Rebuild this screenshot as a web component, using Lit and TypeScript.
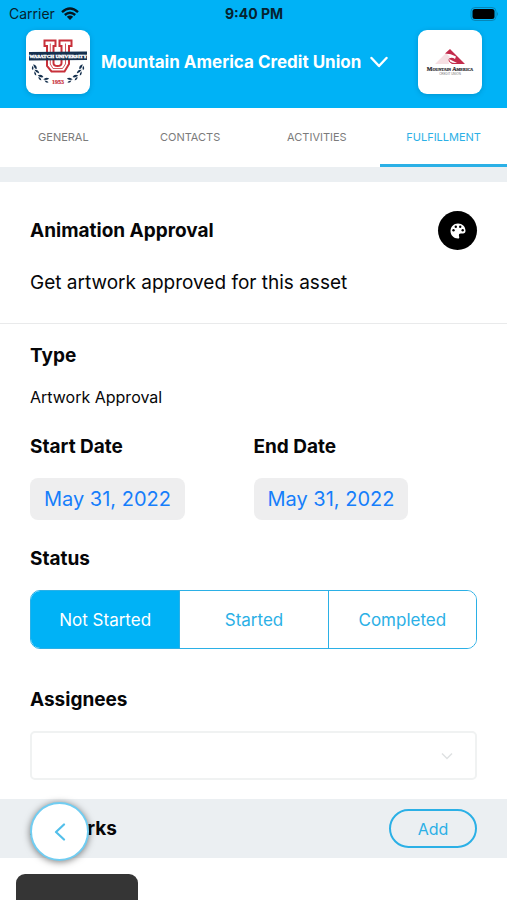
import { LitElement, html, css, svg } from "lit";
import { customElement, state } from "lit/decorators.js";
import { classMap } from "lit/directives/class-map.js";

@customElement("school-logo")
class SchoolLogo extends LitElement {
  static styles = css`
    :host { display: block; }
    svg { display: block; width: 100%; height: 100%; }
    .banner { font: 700 5px "Liberation Serif", serif; fill: #fff; stroke: #fff; stroke-width: 0.4; }
    .year { font: 700 6px "Liberation Serif", serif; fill: #c8303a; stroke: #c8303a; stroke-width: 0.2; }
  `;
  render() {
    const leaves = [
      [8, 37, 75], [10, 42, 55], [14, 47, 35], [20, 50, 10],
    ];
    const side = leaves.map(
      ([x, y, r]) => svg`<g transform="translate(${x} ${y}) rotate(${r})">
        <path d="M-2.8 0Q-.5-3.600 2.800-2Q1.800.4-2.8 0Z"/><path d="M-1.400.8Q1.200.2 3 1.800Q.8 3.600-1.400.8Z"/></g>`
    );
    return html`<svg viewBox="0 0 64 64" role="img" aria-label="Wasatch University">
      <path d="M18.500 10.500H29.500V16H27.500V33Q27.500 36 31.500 36Q35.500 36 35.500 33V16H33.500V10.500H45.500V16H43V34L38.500 41.500H25.500L21 36V16H18.500Z"
        fill="#fff" stroke="#c8303a" stroke-width="2" />
      <path d="M24.300 13.500V34L27 38.500H36.500L39.500 34V13.500" fill="none" stroke="#c8303a" stroke-width=".8" />
      <path d="M3 22L61 21.500V30L3 30.500Z" fill="#15304e" />
      <text class="banner" x="32" y="28" text-anchor="middle">WASATCH UNIVERSITY</text>
      <g fill="#15304e">${side}</g>
      <g fill="#15304e" transform="matrix(-1 0 0 1 64 0)">${side}</g>
      <text class="year" x="32" y="54" text-anchor="middle">1953</text>
    </svg>`;
  }
}

@customElement("sponsor-logo")
class SponsorLogo extends LitElement {
  static styles = css`
    :host { display: block; }
    svg { display: block; width: 100%; height: 100%; }
    .name { font: 700 5px "Liberation Serif", serif; fill: #2c2a30; stroke: #2c2a30; stroke-width: 0.2; }
    .cap { font-size: 6px; }
    .small { font-size: 4px; }
    .sub { font: 400 3px "Liberation Sans", sans-serif; fill: #77757a; }
  `;
  render() {
    return html`<svg viewBox="0 0 64 64" role="img" aria-label="Mountain America Credit Union">
      <path d="M17 34L28 23L32 27Q29 29 31 34Z" fill="#f6dfe3" />
      <path d="M27 23.500L32 19L47 34H34Q29 31 31 28.500Q34 27 37 29L38 26.500Q33 23.500 27 23.500Z" fill="#c32b4c" />
      <path d="M31 29Q35 31 39 33Q35 33.500 32 31.500Z" fill="#fff" />
      <text class="name" x="32" y="41" text-anchor="middle"><tspan class="cap">M</tspan><tspan class="small">OUNTAIN</tspan> <tspan class="cap">A</tspan><tspan class="small">MERICA</tspan></text>
      <text class="sub" x="32" y="45" text-anchor="middle">CREDIT UNION</text>
    </svg>`;
  }
}

@customElement("app-root")
class AppRoot extends LitElement {
  @state() private tab = "Fulfillment";
  @state() private status = "Not Started";

  static styles = css`
    :host {
      display: flex; flex-direction: column; height: 100vh; overflow: hidden; position: relative;
      background: #fff; color: #060608; font-family: Inter, "Noto Sans", sans-serif;
      --blue: #00b2f6; --line-blue: #2bb0e6; --band: #ebeff2; --gutter: 30px;
    }
    * { box-sizing: border-box; }
    button, select { font: inherit; margin: 0; cursor: pointer; }
    h1, h2, p { margin: 0; }
    svg { display: block; }

    .top { background: var(--blue); flex: none; padding-bottom: 14px; }
    .device {
      display: grid; grid-template-columns: 1fr auto 1fr; align-items: center;
      height: 30px; padding: 0 8px 3px 9px; font-size: 14px; color: #06222f;
    }
    .carrier { display: flex; align-items: center; gap: 6px; }
    .clock { font-weight: 700; }
    .battery { justify-self: end; }
    .account { display: flex; align-items: center; justify-content: space-between; padding: 0 25px 0 26px; }
    .logo { width: 64px; height: 64px; flex: none; background: #fff; border-radius: 9px; box-shadow: 0 1px 5px #0050784d; }
    .switcher {
      flex: 1; display: flex; align-items: center; gap: 9px; padding: 0 0 0 11px; border: 0;
      background: none; color: #fff; font-size: 17px; font-weight: 700; white-space: nowrap;
    }

    .tabs { display: grid; grid-template-columns: repeat(4, 1fr); flex: none; height: 59px; }
    .tab {
      border: 0; border-bottom: 3px solid transparent; padding: 2px 0 0;
      background: none; color: #7b7b7b; font-size: 11px; text-transform: uppercase;
    }
    .tab.on { color: var(--line-blue); border-bottom-color: var(--line-blue); }

    main { flex: 1; min-height: 0; overflow-y: auto; scrollbar-width: none; }
    .intro { border-top: 15px solid var(--band); border-bottom: 1px solid #e9eaeb; padding: 29px var(--gutter) 26px; }
    .intro-head { display: flex; align-items: center; justify-content: space-between; }
    .title { font-size: 19px; line-height: 24px; font-weight: 700; }
    .art { width: 39px; height: 39px; border-radius: 50%; background: #000; display: grid; place-items: center; }
    .desc { margin-top: 19px; font-size: 19px; line-height: 28px; }

    .form { padding: 20px var(--gutter) 19px; }
    .plain { margin-top: 17px; font-size: 16px; line-height: 24px; }
    .dates { display: grid; grid-template-columns: 1fr 1fr; margin-top: 26px; }
    .date {
      display: block; margin-top: 19px; height: 42px; padding: 0 14px; border: 0; border-radius: 8px;
      background: #eeeeef; color: #167efb; font-size: 20px;
    }
    .gap { margin-top: 27px; }
    .segments {
      display: grid; grid-template-columns: repeat(3, 1fr); height: 59px; margin-top: 19px;
      border: 1px solid var(--line-blue); border-radius: 10px; overflow: hidden;
    }
    .segment { border: 0; border-left: 1px solid var(--line-blue); background: #fff; color: var(--line-blue); font-size: 17px; padding: 0; }
    .segment:first-child { border-left: 0; }
    .segment.on { background: var(--blue); color: #fff; }
    .assign { display: block; margin-top: 39px; }
    .picker { display: grid; align-items: center; margin-top: 19px; }
    .picker > * { grid-area: 1 / 1; }
    .select { appearance: none; width: 100%; height: 49px; border: 2px solid #f0f2f2; border-radius: 5px; background: #fff; }
    .caret { justify-self: end; margin-right: 24px; pointer-events: none; }

    .artworks { display: flex; align-items: center; justify-content: space-between; height: 59px; padding: 0 var(--gutter); background: var(--band); }
    .add { width: 88px; height: 39px; border: 2px solid var(--line-blue); border-radius: 20px; background: none; color: var(--line-blue); font-size: 16px; }
    .thumbs { padding: 16px; }
    .thumb { width: 122px; height: 122px; border-radius: 9px; background: #353535; }
    .back {
      position: absolute; left: var(--gutter); bottom: 39px; width: 59px; height: 59px; padding: 0;
      display: grid; place-items: center; border: 2px solid #70cdf2; border-radius: 50%;
      background: #fff; box-shadow: 0 1px 7px #00000080;
    }
  `;

  render() {
    return html`
      <header class="top">
        <div class="device">
          <span class="carrier">Carrier
            <svg width="18" height="14" viewBox="0 0 18 14" fill="none" stroke="#06161f" stroke-width="2.400">
              <path d="M1 5.200Q9-2 17 5.200M3.800 8Q9 3.400 14.200 8" /><path d="M9 13L5.800 9.800Q9 7.400 12.200 9.800Z" fill="#06161f" stroke="none" />
            </svg>
          </span>
          <span class="clock">9:40 PM</span>
          <svg class="battery" width="29" height="14" viewBox="0 0 29 14">
            <rect x="1" y=".5" width="25" height="13" rx="4" fill="none" stroke="#0686b8" />
            <rect x="2.500" y="2" width="22" height="10" rx="2.500" fill="#000" />
            <path d="M27 5Q29 7 27 9Z" fill="#0686b8" />
          </svg>
        </div>
        <div class="account">
          <school-logo class="logo"></school-logo>
          <button class="switcher">Mountain America Credit Union
            <svg width="18" height="12" viewBox="0 0 18 12" fill="none" stroke="#fff" stroke-width="2.400" stroke-linecap="round" stroke-linejoin="round"><path d="M1.500 2L9 10L16.500 2" /></svg>
          </button>
          <sponsor-logo class="logo"></sponsor-logo>
        </div>
      </header>
      <nav class="tabs">
        ${["General", "Contacts", "Activities", "Fulfillment"].map(
          (t) => html`<button class=${classMap({ tab: true, on: t === this.tab })} @click=${() => (this.tab = t)}>${t}</button>`
        )}
      </nav>
      <main>
        <section class="intro">
          <div class="intro-head">
            <h1 class="title">Animation Approval</h1>
            <span class="art">
              <svg width="16" height="16" viewBox="0 0 16 16">
                <path fill="#fff" d="M8 .5C3.800.5.5 3.700.5 8S3.800 15.500 8 15.500C9.500 15.500 9.400 14.200 9.100 13.400C8.600 11.700 9 10.500 10.800 10.500H13C14.600 10.500 15.500 9.400 15.500 7.700C15.500 3.600 12.200.5 8 .5Z" />
                <g><circle cx="3.500" cy="7.200" r="1.200" /><circle cx="5.800" cy="3.800" r="1.200" /><circle cx="10.200" cy="3.800" r="1.200" /><circle cx="12.700" cy="7.200" r="1.200" /></g>
              </svg>
            </span>
          </div>
          <p class="desc">Get artwork approved for this asset</p>
        </section>
        <section class="form">
          <h2 class="title">Type</h2>
          <p class="plain">Artwork Approval</p>
          <div class="dates">
            ${["Start Date", "End Date"].map(
              (d) => html`<div><h2 class="title">${d}</h2><button class="date" aria-label="${d}: May 31, 2022">May 31, 2022</button></div>`
            )}
          </div>
          <h2 class="title gap">Status</h2>
          <div class="segments">
            ${["Not Started", "Started", "Completed"].map(
              (s) => html`<button class=${classMap({ segment: true, on: s === this.status })} aria-pressed=${s === this.status} @click=${() => (this.status = s)}>${s}</button>`
            )}
          </div>
          <label class="title assign" for="assignees">Assignees</label>
          <div class="picker">
            <select class="select" id="assignees"><option></option></select>
            <svg class="caret" width="12" height="8" viewBox="0 0 12 8" fill="none" stroke="#dfe1e2" stroke-width="1.500"><path d="M1 1.500L6 6.500L11 1.500" /></svg>
          </div>
        </section>
        <section>
          <div class="artworks"><h2 class="title">Artworks</h2><button class="add">Add</button></div>
          <div class="thumbs"><div class="thumb"></div></div>
        </section>
      </main>
      <button class="back" aria-label="Back">
        <svg width="12" height="18" viewBox="0 0 12 18" fill="none" stroke="#52bfea" stroke-width="2.200" stroke-linecap="round" stroke-linejoin="round"><path d="M10 1.500L2 9L10 16.500" /></svg>
      </button>
    `;
  }
}
